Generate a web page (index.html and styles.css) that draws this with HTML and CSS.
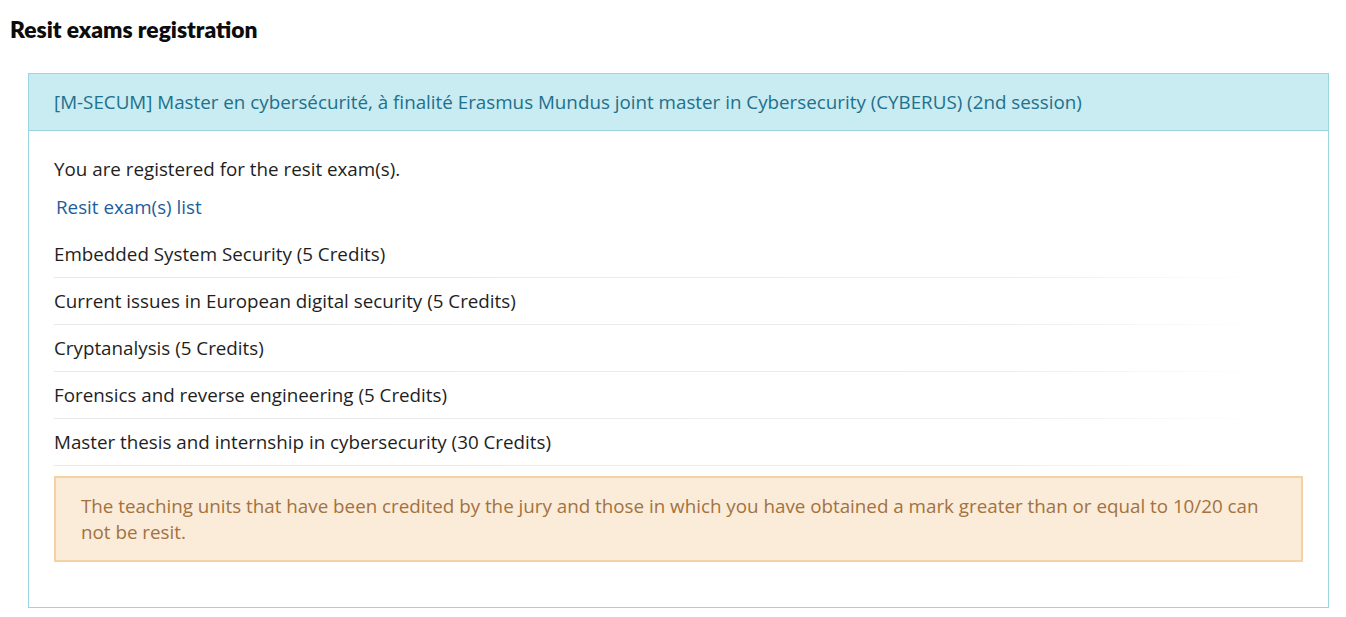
FILE: index.html
```html
<!DOCTYPE html>
<html lang="en">
<head>
  <meta charset="UTF-8">
  <meta name="viewport" content="width=device-width, initial-scale=1.0">
  <title>Resit exams registration</title>
  <link rel="stylesheet" href="styles.css">
</head>
<body>
  <h2 class="page-title">Resit exams registration</h2>

  <div class="panel">
    <div class="panel-heading">
      [M-SECUM] Master en cybersécurité, à finalité Erasmus Mundus joint master in Cybersecurity (CYBERUS) (2nd session)
    </div>
    <div class="panel-body">
      <p class="status">You are registered for the resit exam(s).</p>
      <a class="list-link" href="#">Resit exam(s) list</a>

      <ul class="exam-list">
        <li>Embedded System Security (5 Credits)</li>
        <li>Current issues in European digital security (5 Credits)</li>
        <li>Cryptanalysis (5 Credits)</li>
        <li>Forensics and reverse engineering (5 Credits)</li>
        <li>Master thesis and internship in cybersecurity (30 Credits)</li>
      </ul>

      <div class="alert">
        The teaching units that have been credited by the jury and those in which you have obtained a mark greater than or equal to 10/20 can not be resit.
      </div>
    </div>
  </div>
</body>
</html>
```

FILE: styles.css
```css
body {
  font-family: "Open Sans", "Noto Sans", sans-serif;
  font-size: 18.8px;
  color: #1e1e1e;
  background-color: #fff;
  margin: 0;
  padding: 0 17px 0 28px;
}
.page-title {
  font-family: "Lato", "Open Sans", sans-serif;
  font-weight: 800;
  font-size: 22.8px;
  color: #0c0c0c;
  margin: 15px 0 30px -18px;
  line-height: 28px;
}
.panel {
  border: 1px solid #99d5e2;
  background-color: #fff;
}
.panel-heading {
  background-color: #c9ebf2;
  color: #21708c;
  border-bottom: 1px solid #99d5e2;
  padding: 0 25px;
  height: 56px;
  display: flex;
  align-items: center;
}
.panel-body {
  padding: 26px 25px 25px;
}
.status {
  margin: 0 0 14px;
  line-height: 24px;
}
.list-link {
  display: block;
  color: #1d5d9b;
  text-decoration: none;
  line-height: 24px;
  margin-left: 2px;
}
.exam-list {
  list-style: none;
  margin: 12px 0 10px;
  padding: 0;
}
.exam-list li {
  line-height: 24px;
  padding: 11px 0 12px;
  position: relative;
}
.exam-list li::after {
  content: "";
  position: absolute;
  left: 0;
  right: 0;
  bottom: 0;
  height: 1px;
  background: linear-gradient(to right, #e9e9e9 0%, #ececec 75%, rgba(255, 255, 255, 0) 97%);
}
.alert {
  background-color: #fbebd9;
  border: 2px solid #f5d2a3;
  color: #a2723f;
  padding: 15px 25px 15px;
  line-height: 26px;
  margin-bottom: 20px;
}
```
